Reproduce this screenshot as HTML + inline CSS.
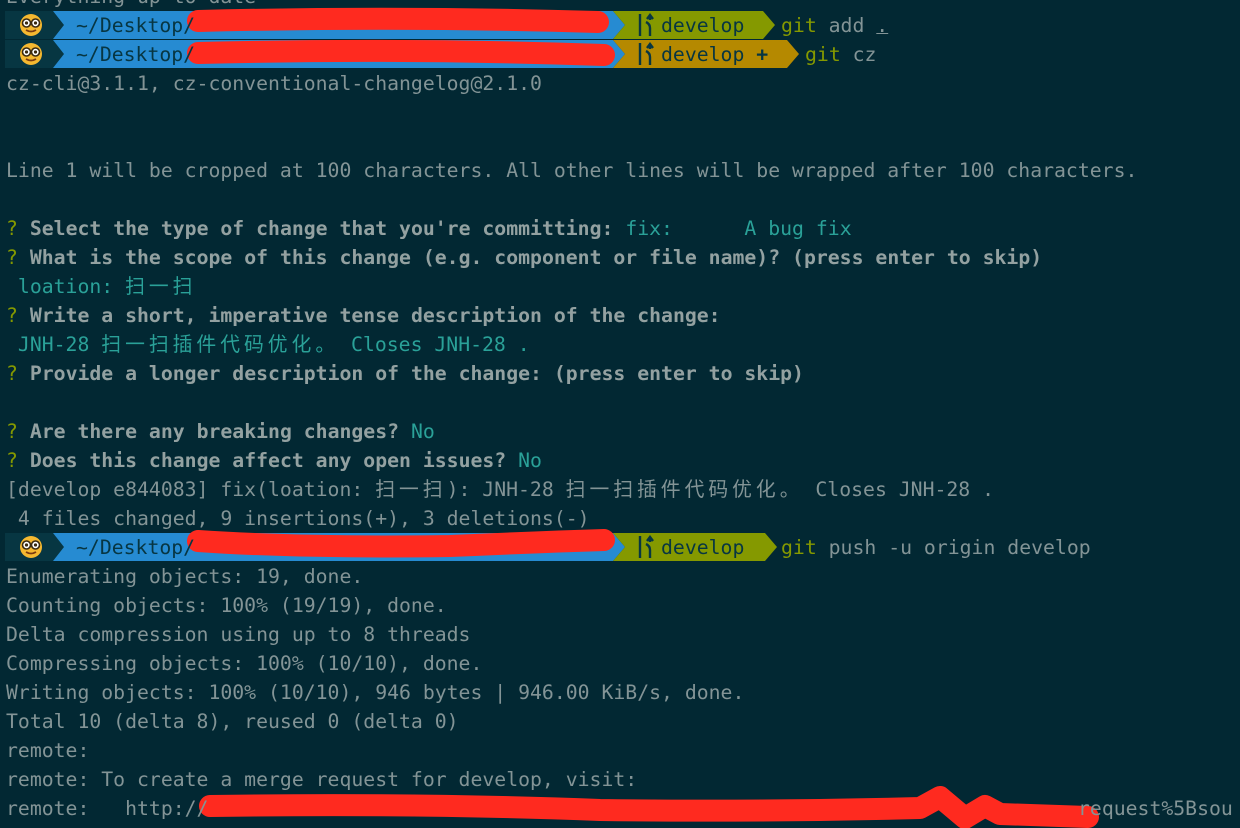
<!DOCTYPE html>
<html><head><meta charset="utf-8"><style>
html,body{margin:0;padding:0;background:#022833;width:1240px;height:828px;overflow:hidden}
.l{position:absolute;left:6px;height:29px;line-height:29px;white-space:pre;font-family:"DejaVu Sans Mono","Liberation Mono","Noto Sans CJK SC",monospace;font-size:19.8px;color:#839496}
.c{font-family:"Noto Sans CJK SC",sans-serif;letter-spacing:4px;line-height:0}
.b{font-weight:bold;color:#93a1a1}
.q{color:#859900}
.a{color:#2aa198}
.g{color:#859900}
.d{color:#073642}
</style></head><body>
<svg width="1240" height="828" style="position:absolute;left:0;top:0">
<polygon points="5,11 613,11 625,25 613,39 5,39" fill="#268bd2"/>
<polygon points="5,11 53,11 64,25 53,39 5,39" fill="#073642"/>
<polygon points="613,11 763,11 775,25 763,39 613,39 625,25" fill="#859900"/>
<polygon points="5,40 613,40 625,54 613,68 5,68" fill="#268bd2"/>
<polygon points="5,40 53,40 64,54 53,68 5,68" fill="#073642"/>
<polygon points="613,40 787,40 799,54 787,68 613,68 625,54" fill="#b58900"/>
<polygon points="5,533 613,533 625,547 613,561 5,561" fill="#268bd2"/>
<polygon points="5,533 53,533 64,547 53,561 5,561" fill="#073642"/>
<polygon points="613,533 765,533 777,547 765,561 613,561 625,547" fill="#859900"/>
<g id="e"><circle cx="31" cy="25" r="11" fill="#f5b830"/><circle cx="26.5" cy="23" r="4" fill="#fff" stroke="#3a2a10" stroke-width="1.6"/><circle cx="35.5" cy="23" r="4" fill="#fff" stroke="#3a2a10" stroke-width="1.6"/><circle cx="26.5" cy="23" r="1.6" fill="#3a2a10"/><circle cx="35.5" cy="23" r="1.6" fill="#3a2a10"/><path d="M26 30 Q31 33 36 30" stroke="#7a3a10" stroke-width="1.8" fill="none"/></g>
<use href="#e" y="29"/><use href="#e" y="522"/>
<g id="br" stroke="#073642" stroke-width="2.4" fill="none"><path d="M640 14 V36"/><path d="M650 36 V28 Q650 24 646 22 M650 20 V16 M647 19 L650 15 L653 19"/></g>
<use href="#br" y="29"/><use href="#br" y="522"/>
<g stroke="#ff2a1f" stroke-width="22" stroke-linecap="round" stroke-linejoin="round" fill="none">
<path d="M198 21 Q400 16 598 22"/>
<path d="M198 53 Q400 48 604 55"/>
<path d="M198 541 Q300 548 450 546 Q540 542 604 540"/>
<path d="M210 806 Q420 803 600 810 Q760 812 920 808 L940 797 L965 818 L985 806 L1000 814 L1088 817"/>
</g>
</svg>
<div class="l" style="top:-18px">Everything up-to-date</div>
<div class="l d" style="top:11px;left:76px">~/Desktop/</div>
<div class="l d" style="top:11px;left:661px">develop</div>
<div class="l" style="top:11px;left:781px"><span class="g">git</span> add <u>.</u></div>
<div class="l d" style="top:40px;left:76px">~/Desktop/</div>
<div class="l d" style="top:40px;left:661px">develop <b>+</b></div>
<div class="l" style="top:40px;left:805px"><span class="g">git</span> cz</div>
<div class="l" style="top:69px">cz-cli@3.1.1, cz-conventional-changelog@2.1.0</div>
<div class="l" style="top:156px">Line 1 will be cropped at 100 characters. All other lines will be wrapped after 100 characters.</div>
<div class="l" style="top:214px"><span class="q">?</span> <span class="b">Select the type of change that you're committing:</span> <span class="a">fix:      A bug fix</span></div>
<div class="l" style="top:243px"><span class="q">?</span> <span class="b">What is the scope of this change (e.g. component or file name)? (press enter to skip)</span></div>
<div class="l a" style="top:272px"> loation: <span class="c">扫一扫</span></div>
<div class="l" style="top:301px"><span class="q">?</span> <span class="b">Write a short, imperative tense description of the change:</span></div>
<div class="l a" style="top:330px"> JNH-28 <span class="c">扫一扫插件代码优化。</span> Closes JNH-28 .</div>
<div class="l" style="top:359px"><span class="q">?</span> <span class="b">Provide a longer description of the change: (press enter to skip)</span></div>
<div class="l" style="top:417px"><span class="q">?</span> <span class="b">Are there any breaking changes?</span> <span class="a">No</span></div>
<div class="l" style="top:446px"><span class="q">?</span> <span class="b">Does this change affect any open issues?</span> <span class="a">No</span></div>
<div class="l" style="top:475px">[develop e844083] fix(loation: <span class="c">扫一扫</span>): JNH-28 <span class="c">扫一扫插件代码优化。</span> Closes JNH-28 .</div>
<div class="l" style="top:504px"> 4 files changed, 9 insertions(+), 3 deletions(-)</div>
<div class="l d" style="top:533px;left:76px">~/Desktop/</div>
<div class="l d" style="top:533px;left:661px">develop</div>
<div class="l" style="top:533px;left:781px"><span class="g">git</span> push -u origin develop</div>
<div class="l" style="top:562px">Enumerating objects: 19, done.</div>
<div class="l" style="top:591px">Counting objects: 100% (19/19), done.</div>
<div class="l" style="top:620px">Delta compression using up to 8 threads</div>
<div class="l" style="top:649px">Compressing objects: 100% (10/10), done.</div>
<div class="l" style="top:678px">Writing objects: 100% (10/10), 946 bytes | 946.00 KiB/s, done.</div>
<div class="l" style="top:707px">Total 10 (delta 8), reused 0 (delta 0)</div>
<div class="l" style="top:736px">remote:</div>
<div class="l" style="top:765px">remote: To create a merge request for develop, visit:</div>
<div class="l" style="top:794px">remote:   http://</div>
<div class="l" style="top:794px;left:1078px">request%5Bsou</div>
</body></html>
